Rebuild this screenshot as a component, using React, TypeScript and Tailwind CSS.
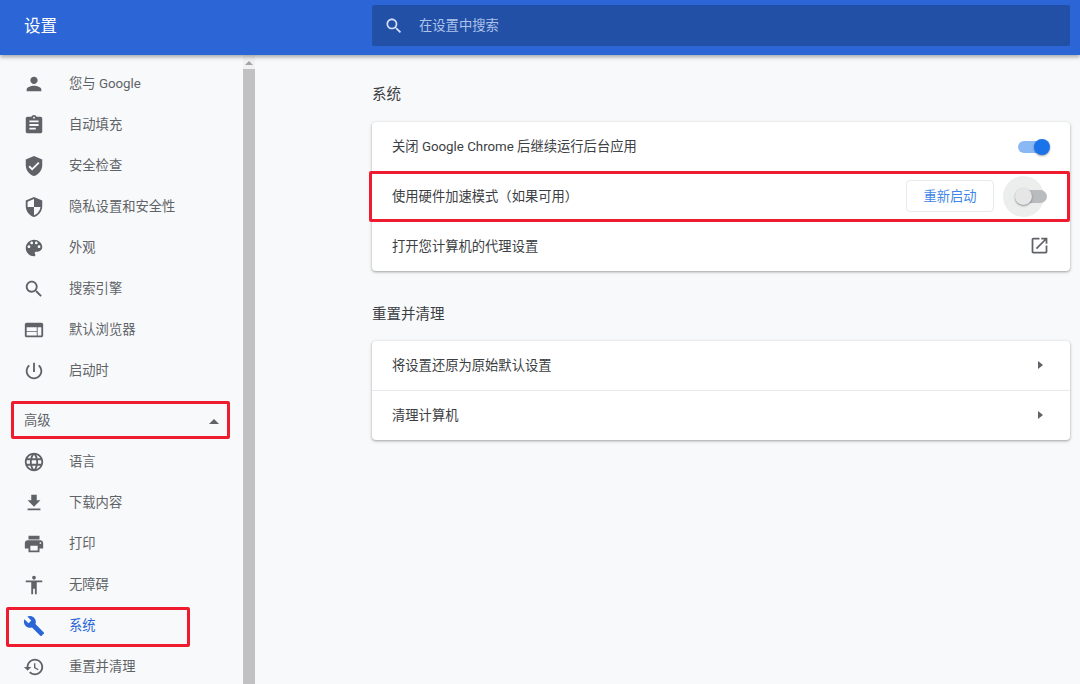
import type { ReactNode } from 'react'

const icons = {
  person: 'M12 12c2.21 0 4-1.79 4-4s-1.79-4-4-4-4 1.79-4 4 1.79 4 4 4zm0 2c-2.67 0-8 1.34-8 4v2h16v-2c0-2.66-5.33-4-8-4z',
  assignment: 'M19 3h-4.18C14.4 1.84 13.3 1 12 1c-1.3 0-2.4.84-2.82 2H5c-1.1 0-2 .9-2 2v14c0 1.1.9 2 2 2h14c1.1 0 2-.9 2-2V5c0-1.1-.9-2-2-2zm-7 0c.55 0 1 .45 1 1s-.45 1-1 1-1-.45-1-1 .45-1 1-1zm2 14H7v-2h7v2zm3-4H7v-2h10v2zm0-4H7V7h10v2z',
  verified: 'M12 1L3 5v6c0 5.55 3.84 10.74 9 12 5.16-1.26 9-6.45 9-12V5l-9-4zm-2 16l-4-4 1.41-1.41L10 14.17l6.59-6.59L18 9l-8 8z',
  security: 'M12 1L3 5v6c0 5.55 3.84 10.74 9 12 5.16-1.26 9-6.45 9-12V5l-9-4zm0 10.99h7c-.53 4.12-3.28 7.79-7 8.94V12H5V6.3l7-3.11v8.8z',
  palette: 'M12 3c-4.97 0-9 4.03-9 9s4.03 9 9 9c.83 0 1.5-.67 1.5-1.5 0-.39-.15-.74-.39-1.01-.23-.26-.38-.61-.38-.99 0-.83.67-1.5 1.5-1.5H16c2.76 0 5-2.24 5-5 0-4.42-4.03-8-9-8zm-5.5 9c-.83 0-1.5-.67-1.5-1.5S5.67 9 6.5 9 8 9.67 8 10.5 7.33 12 6.5 12zm3-4C8.67 8 8 7.33 8 6.5S8.67 5 9.5 5s1.5.67 1.5 1.5S10.33 8 9.5 8zm5 0c-.83 0-1.5-.67-1.5-1.5S13.67 5 14.5 5s1.5.67 1.5 1.5S15.33 8 14.5 8zm3 4c-.83 0-1.5-.67-1.5-1.5S16.67 9 17.5 9s1.5.67 1.5 1.5-.67 1.5-1.5 1.5z',
  search: 'M15.5 14h-.79l-.28-.27C15.41 12.59 16 11.11 16 9.5 16 5.91 13.09 3 9.5 3S3 5.91 3 9.5 5.91 16 9.5 16c1.61 0 3.09-.59 4.23-1.57l.27.28v.79l5 4.99L20.49 19l-4.99-5zm-6 0C7.01 14 5 11.99 5 9.5S7.01 5 9.5 5 14 7.01 14 9.5 11.99 14 9.5 14z',
  web: 'M20 4H4c-1.1 0-1.99.9-1.99 2L2 18c0 1.1.9 2 2 2h16c1.1 0 2-.9 2-2V6c0-1.1-.9-2-2-2zm-5 14H4v-4h11v4zm0-5H4V9h11v4zm5 5h-4V9h4v9z',
  power: 'M13 3h-2v10h2V3zm4.83 2.17l-1.42 1.42C17.99 7.86 19 9.81 19 12c0 3.87-3.13 7-7 7s-7-3.13-7-7c0-2.19 1.01-4.14 2.58-5.42L6.17 5.17C4.23 6.82 3 9.26 3 12c0 4.97 4.03 9 9 9s9-4.03 9-9c0-2.74-1.23-5.18-3.17-6.83z',
  language: 'M11.99 2C6.47 2 2 6.48 2 12s4.47 10 9.99 10C17.52 22 22 17.52 22 12S17.52 2 11.99 2zm6.93 6h-2.95c-.32-1.25-.78-2.45-1.38-3.56 1.84.63 3.37 1.91 4.33 3.56zM12 4.04c.83 1.2 1.48 2.53 1.91 3.96h-3.82c.43-1.43 1.08-2.76 1.91-3.96zM4.26 14C4.1 13.36 4 12.69 4 12s.1-1.36.26-2h3.38c-.08.66-.14 1.32-.14 2 0 .68.06 1.34.14 2H4.26zm.82 2h2.95c.32 1.25.78 2.45 1.38 3.56-1.84-.63-3.37-1.9-4.33-3.56zm2.95-8H5.08c.96-1.66 2.49-2.93 4.33-3.56C8.81 5.55 8.35 6.75 8.03 8zM12 19.96c-.83-1.2-1.48-2.53-1.91-3.96h3.82c-.43 1.43-1.08 2.76-1.91 3.96zM14.34 14H9.66c-.09-.66-.16-1.32-.16-2 0-.68.07-1.35.16-2h4.68c.09.65.16 1.32.16 2 0 .68-.07 1.34-.16 2zm.25 5.56c.6-1.11 1.06-2.31 1.38-3.56h2.95c-.96 1.65-2.49 2.93-4.33 3.56zM16.36 14c.08-.66.14-1.32.14-2 0-.68-.06-1.34-.14-2h3.38c.16.64.26 1.31.26 2s-.1 1.36-.26 2h-3.38z',
  download: 'M19 9h-4V3H9v6H5l7 7 7-7zM5 18v2h14v-2H5z',
  print: 'M19 8H5c-1.66 0-3 1.34-3 3v6h4v4h12v-4h4v-6c0-1.66-1.34-3-3-3zm-3 11H8v-5h8v5zm3-7c-.55 0-1-.45-1-1s.45-1 1-1 1 .45 1 1-.45 1-1 1zm-1-9H6v4h12V3z',
  accessibility: 'M12 2c1.1 0 2 .9 2 2s-.9 2-2 2-2-.9-2-2 .9-2 2-2zm9 7h-6v13h-2v-6h-2v6H9V9H3V7h18v2z',
  build: 'M22.7 19l-9.1-9.1c.9-2.3.4-5-1.5-6.9-2-2-5-2.4-7.4-1.3L9 6 6 9 1.6 4.7C.4 7.1.9 10.1 2.9 12.1c1.9 1.9 4.6 2.4 6.9 1.5l9.1 9.1c.4.4 1 .4 1.4 0l2.3-2.3c.5-.4.5-1.1.1-1.4z',
  restore: 'M13 3c-4.97 0-9 4.03-9 9H1l3.89 3.89.07.14L9 12H6c0-3.87 3.13-7 7-7s7 3.13 7 7-3.13 7-7 7c-1.93 0-3.68-.79-4.94-2.06l-1.42 1.42C8.27 19.99 10.51 21 13 21c4.97 0 9-4.03 9-9s-4.03-9-9-9zm-1 5v5l4.28 2.54.72-1.21-3.5-2.08V8H12z',
  openInNew: 'M19 19H5V5h7V3H5c-1.11 0-2 .9-2 2v14c0 1.1.89 2 2 2h14c1.1 0 2-.9 2-2v-7h-2v7zM14 3v2h3.59l-9.83 9.83 1.41 1.41L19 6.41V10h2V3h-7z',
}

type IconName = keyof typeof icons

function Icon({ name, className }: { name: IconName; className: string }) {
  return (
    <svg viewBox="0 0 24 24" fill="currentColor" className={className}>
      <path d={icons[name]} />
    </svg>
  )
}

function NavItem({ icon, label, active }: { icon: IconName; label: string; active?: boolean }) {
  return (
    <div className={`relative flex h-[41px] items-center pl-[23px] ${active ? 'text-[#2b66d6]' : 'text-[#5f6368]'}`}>
      <Icon name={icon} className="h-[22px] w-[22px] shrink-0" />
      <span className="ml-[24px]">{label}</span>
      {active && <div className="absolute left-[6px] top-[2px] h-[40px] w-[184px] rounded-[2px] border-[3px] border-[#ee1c2e]" />}
    </div>
  )
}

function Row({ children, divider }: { children: ReactNode; divider?: boolean }) {
  return (
    <div className={`relative flex h-[49.5px] items-center pl-5 pr-5 ${divider ? 'border-t border-[#e8eaed]' : ''}`}>
      {children}
    </div>
  )
}

function Card({ children }: { children: ReactNode }) {
  return <div className="rounded bg-white shadow-[0_1px_2px_rgba(60,64,67,0.3),0_1px_3px_1px_rgba(60,64,67,0.15)]">{children}</div>
}

function Arrow() {
  return <div className="mr-[7px] ml-auto h-0 w-0 border-y-[4.5px] border-l-[5px] border-y-transparent border-l-[#5f6368]" />
}

export default function App() {
  return (
    <div
      className="flex h-[684px] w-[1080px] flex-col overflow-hidden bg-[#f8f9fa] text-[13.3px] text-[#3c4043]"
      style={{ fontFamily: 'Roboto, "Noto Sans CJK SC", sans-serif' }}
    >
      {/* Header */}
      <header className="relative z-10 flex h-[55px] shrink-0 items-center bg-[#2c66d6] shadow-[0_2px_4px_rgba(60,64,67,0.45)]">
        <div className="w-[372px] pb-[1px] pl-6 text-[16.5px] text-white">设置</div>
        <div className="mb-[4px] flex h-[41px] w-[698px] items-center rounded-[2px] bg-[#2350a7] pl-3 text-[#aec3ea]">
          <Icon name="search" className="h-5 w-5 text-[#d6e0f5]" />
          <span className="ml-[15px]">在设置中搜索</span>
        </div>
      </header>

      <div className="flex min-h-0 flex-1">
        {/* Sidebar */}
        <aside className="w-[243px] shrink-0 pt-[8px]">
          <NavItem icon="person" label="您与 Google" />
          <NavItem icon="assignment" label="自动填充" />
          <NavItem icon="verified" label="安全检查" />
          <NavItem icon="security" label="隐私设置和安全性" />
          <NavItem icon="palette" label="外观" />
          <NavItem icon="search" label="搜索引擎" />
          <NavItem icon="web" label="默认浏览器" />
          <NavItem icon="power" label="启动时" />
          <div className="relative mt-[12px] mb-[2px] flex h-[36px] items-center pl-6 pr-[24px] text-[#5f6368]">
            <span>高级</span>
            <div className="ml-auto h-0 w-0 border-x-[5px] border-b-[5px] border-x-transparent border-b-[#5f6368]" />
            <div className="absolute -top-[2px] left-[11px] h-[38px] w-[219px] rounded-[2px] border-[3px] border-[#ee1c2e]" />
          </div>
          <NavItem icon="language" label="语言" />
          <NavItem icon="download" label="下载内容" />
          <NavItem icon="print" label="打印" />
          <NavItem icon="accessibility" label="无障碍" />
          <NavItem icon="build" label="系统" active />
          <NavItem icon="restore" label="重置并清理" />
        </aside>

        {/* Scrollbar */}
        <div className="flex w-3 shrink-0 flex-col bg-[#f1f1f1]">
          <div className="flex h-[14px] shrink-0 items-center justify-center pt-[1px]">
            <div className="h-0 w-0 border-x-[4px] border-b-[4px] border-x-transparent border-b-[#a3a3a3]" />
          </div>
          <div className="flex-1 bg-[#c1c1c1]" />
        </div>

        {/* Main */}
        <main className="flex-1 pl-[117px] pr-[10px]">
          <h2 className="mt-[31px] h-[36px] text-[14.5px] leading-[18px] font-normal">系统</h2>
          <Card>
            <Row>
              <span>关闭 Google Chrome 后继续运行后台应用</span>
              <div className="relative ml-auto mr-[4px] h-3 w-7 rounded-full bg-[#8ab8f5]">
                <div className="absolute -right-[4px] -top-[2px] h-4 w-4 rounded-full bg-[#1a73e8] shadow-[0_1px_2px_rgba(0,0,0,0.4)]" />
              </div>
            </Row>
            <Row>
              <span className="pt-[2px]">使用硬件加速模式（如果可用）</span>
              <div className="ml-auto flex h-8 w-[88px] items-center justify-center rounded border border-[#e8eaed] pt-[1px] text-[#3f86e8]">重新启动</div>
              <div className="relative ml-[9px] mr-[3px] h-[41px] w-[44px]">
                <div className="absolute left-0 top-0 h-[41px] w-[41px] rounded-full bg-[#eceded]" />
                <div className="absolute left-[13px] top-[14px] h-[13px] w-[31px] rounded-full bg-[#b9bbbe]" />
                <div className="absolute left-[12px] top-[12px] h-[17px] w-[17px] rounded-full bg-[#e6e6e6] shadow-[0_1px_2px_rgba(0,0,0,0.4)]" />
              </div>
              <div className="absolute -left-[3px] right-0 -top-[1px] h-[51px] rounded-[2px] border-[3px] border-[#ee1c2e]" />
            </Row>
            <Row>
              <span className="pt-[3px]">打开您计算机的代理设置</span>
              <Icon name="openInNew" className="ml-auto h-[21px] w-[21px] text-[#5f6368]" />
            </Row>
          </Card>

          <h2 className="mt-[35.5px] h-[34.5px] text-[14.5px] leading-[18px] font-normal">重置并清理</h2>
          <Card>
            <Row>
              <span className="pt-[2px]">将设置还原为原始默认设置</span>
              <Arrow />
            </Row>
            <Row divider>
              <span className="pt-[2px]">清理计算机</span>
              <Arrow />
            </Row>
          </Card>
        </main>
      </div>
    </div>
  )
}
